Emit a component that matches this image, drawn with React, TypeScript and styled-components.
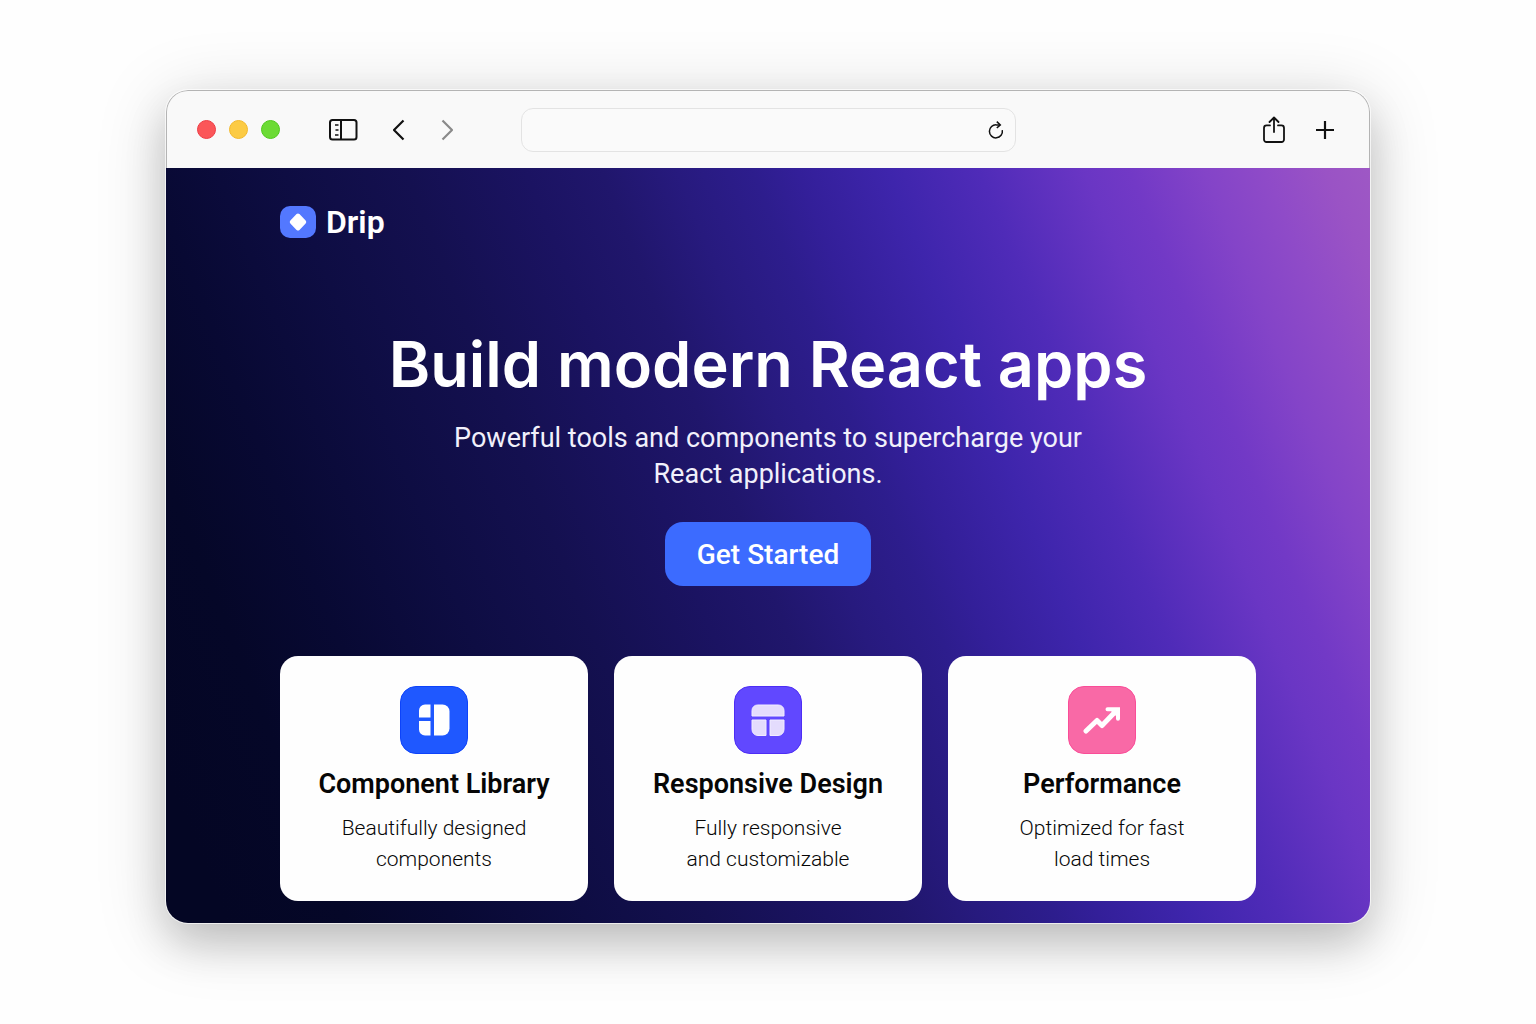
import React from "react";
import styled, { createGlobalStyle } from "styled-components";

const GlobalStyle = createGlobalStyle`
  *, *::before, *::after { box-sizing: border-box; }
  body {
    margin: 0;
    background: #fefefe;
    font-family: Roboto, Inter, "Liberation Sans", sans-serif;
  }
  button, input { font: inherit; }
  h1, h2, p { margin: 0; }
`;

const Stage = styled.div`
  padding: 90px 166px 100px;

  @media (max-width: 1100px) {
    padding: 32px 24px;
  }
`;

const Window = styled.div`
  border-radius: 22px;
  overflow: hidden;
  box-shadow:
    0 0 0 1px rgba(255, 255, 255, 0.7),
    0 22px 42px rgba(0, 0, 0, 0.16),
    0 10px 70px rgba(0, 0, 0, 0.17);
`;

const Toolbar = styled.header`
  display: grid;
  grid-template-columns: 1fr minmax(120px, 495px) 1fr;
  align-items: center;
  height: 78px;
  padding: 0 30px;
  border: 1px solid #b4b4b4;
  border-bottom: 0;
  border-radius: 22px 22px 0 0;
  background: #f9f9f9;
`;

const ToolGroup = styled.div<{ $end?: boolean; $gap: number }>`
  display: flex;
  align-items: center;
  justify-content: ${(p) => (p.$end ? "flex-end" : "flex-start")};
  gap: ${(p) => p.$gap}px;
`;

const WindowButtons = styled.div`
  display: flex;
  gap: 13px;
  margin-right: 14px;
`;

const WindowDot = styled.button<{ $fill: string; $ring: string }>`
  width: 19px;
  height: 19px;
  padding: 0;
  border: 1px solid ${(p) => p.$ring};
  border-radius: 50%;
  background: ${(p) => p.$fill};
`;

const IconButton = styled.button<{ $muted?: boolean }>`
  display: flex;
  padding: 0;
  border: 0;
  background: none;
  color: ${(p) => (p.$muted ? "#8a8a8a" : "#111")};
`;

const AddressBar = styled.div`
  display: flex;
  align-items: center;
  height: 44px;
  padding: 0 11px 0 16px;
  border: 1px solid #e3e3e3;
  border-radius: 12px;
  background: #fafafa;
`;

const AddressInput = styled.input`
  flex: 1;
  min-width: 0;
  border: 0;
  outline: 0;
  background: transparent;
  font-size: 16px;
`;

const Page = styled.main`
  padding: 38px 114px 22px;
  color: #fff;
  background: linear-gradient(
    68deg,
    #040624 4%,
    #050728 12%,
    #080933 19%,
    #0e0d43 28%,
    #141050 36%,
    #1b1362 44%,
    #20166c 49%,
    #271a7e 54%,
    #2d1d8d 59%,
    #331f99 62%,
    #3e25ac 68%,
    #4f2bb8 74%,
    #6a36c4 81%,
    #7239c6 84%,
    #8444c8 89%,
    #8f4bc8 93%,
    #9a53c5 97%,
    #9e58c5 100%
  );

  @media (max-width: 1100px) {
    padding: 32px 24px;
  }
`;

const Brand = styled.a`
  display: inline-flex;
  align-items: center;
  gap: 10px;
  height: 32px;
  color: inherit;
  font-size: 32px;
  font-weight: 600;
  line-height: 32px;
  text-decoration: none;
  vertical-align: top;
`;

const BrandMark = styled.span`
  display: grid;
  place-items: center;
  width: 36px;
  height: 32px;
  border-radius: 10px;
  background: #5378ff;
`;

const Hero = styled.section`
  display: flex;
  flex-direction: column;
  align-items: center;
  margin: 86px 0 70px;
  text-align: center;
`;

const Headline = styled.h1`
  font-family: Inter, Roboto, "Liberation Sans", sans-serif;
  font-size: 63px;
  font-weight: 600;
  line-height: 80px;
`;

const Lead = styled.p`
  max-width: 680px;
  margin-top: 16px;
  color: #f1f0fb;
  font-size: 27px;
  line-height: 36px;
`;

const PrimaryButton = styled.button`
  height: 64px;
  margin-top: 30px;
  padding: 0 32px;
  border: 0;
  border-radius: 18px;
  background: #3c6bff;
  color: #fff;
  font-size: 28px;
  font-weight: 500;
`;

const Features = styled.section`
  display: grid;
  grid-template-columns: repeat(auto-fit, minmax(280px, 1fr));
  gap: 26px;
`;

const Card = styled.article`
  display: flex;
  flex-direction: column;
  align-items: center;
  padding: 30px 24px 26px;
  border-radius: 18px;
  background: #fefefe;
  color: #060606;
  text-align: center;
`;

const CardIcon = styled.span<{ $fill: string; $ring: string }>`
  display: grid;
  place-items: center;
  width: 68px;
  height: 68px;
  border: 1px solid ${(p) => p.$ring};
  border-radius: 16px;
  background: ${(p) => p.$fill};
`;

const CardTitle = styled.h2`
  margin-top: 12px;
  font-size: 27px;
  font-weight: 600;
  line-height: 36px;
  white-space: nowrap;
`;

const CardText = styled.p`
  margin-top: 11px;
  font-size: 21px;
  font-weight: 300;
  line-height: 31px;
  white-space: pre-line;
`;

const SidebarIcon = () => (
  <svg width="30" height="28" viewBox="0 0 30 28" fill="none" stroke="currentColor" strokeWidth="2">
    <rect x="2" y="4" width="26.5" height="19.5" rx="2.5" />
    <path d="M13 4v19.5" />
    <path d="M7 9h3.5M7.5 14h3M7 19h3.5" strokeWidth="1.6" />
  </svg>
);

const BackIcon = () => (
  <svg width="14" height="28" viewBox="0 0 14 28" fill="none" stroke="currentColor" strokeWidth="2.2">
    <path d="M11.5 4.5 2 14l9.5 9.5" strokeLinejoin="round" />
  </svg>
);

const ForwardIcon = () => (
  <svg width="14" height="28" viewBox="0 0 14 28" fill="none" stroke="currentColor" strokeWidth="2.2">
    <path d="M2.5 4.5 12 14l-9.5 9.5" strokeLinejoin="round" />
  </svg>
);

const ReloadIcon = () => (
  <svg width="16" height="20" viewBox="0 0 16 20" fill="none" stroke="currentColor" strokeWidth="1.5">
    <path d="M14.3 10.2A6.5 6.5 0 1 1 8.5 4.9L12 4.9" />
    <path d="M8.8 1.6 12.3 4.9 8.8 8" />
  </svg>
);

const ShareIcon = () => (
  <svg width="24" height="28" viewBox="0 0 24 28" fill="none" stroke="currentColor" strokeWidth="1.8" strokeLinecap="round" strokeLinejoin="round">
    <path d="M8 9.4H4.5A2.5 2.5 0 0 0 2 11.9v11.6A2.5 2.5 0 0 0 4.5 26h15a2.5 2.5 0 0 0 2.5-2.5V11.9a2.5 2.5 0 0 0-2.5-2.5H16" />
    <path d="M12 16V1.5M7.5 6 12 1.5 16.5 6" />
  </svg>
);

const PlusIcon = () => (
  <svg width="28" height="28" viewBox="0 0 28 28" fill="none" stroke="currentColor" strokeWidth="2.2">
    <path d="M14 5v18M5 14h18" />
  </svg>
);

const DiamondIcon = () => (
  <svg width="20" height="20" viewBox="0 0 20 20" fill="#fff" stroke="#fff" strokeWidth="4" strokeLinejoin="round">
    <path d="M10 3.5 16.2 10 10 16.5 3.8 10Z" />
  </svg>
);

const LibraryIcon = () => (
  <svg width="32" height="32" viewBox="0 0 32 32" fill="#fff">
    <path d="M12.5 .5V13.5H1V6.5a6 6 0 0 1 6-6Z" />
    <path d="M12.5 17V31.5H7a6 6 0 0 1-6-6V17Z" />
    <path d="M16 .5h8.5a7 7 0 0 1 7 7v17a7 7 0 0 1-7 7H16Z" />
  </svg>
);

const LayoutIcon = () => (
  <svg width="34" height="32" viewBox="0 0 34 32" fill="#e4dcfd" stroke="#f2edff" strokeWidth="1">
    <path d="M6.5 1h21a5.5 5.5 0 0 1 5.5 5.5V12H1V6.5A5.5 5.5 0 0 1 6.5 1Z" />
    <path d="M1 16h14v15.5H7a6 6 0 0 1-6-6Z" />
    <path d="M19 16h14v9.5a6 6 0 0 1-6 6h-8Z" />
  </svg>
);

const TrendIcon = () => (
  <svg width="38" height="30" viewBox="0 0 38 30" fill="none" stroke="#fff" strokeWidth="5" strokeLinecap="round" strokeLinejoin="round">
    <path d="M3 26 14 15.5 19 20.5 33 6" />
    <path d="M24.5 4.2H35V13.8" strokeWidth="4" strokeLinejoin="miter" />
    <path d="M26 4h9v9Z" fill="#fff" stroke="none" />
  </svg>
);

const features = [
  {
    title: "Component Library",
    text: "Beautifully designed\ncomponents",
    fill: "#1f58ff",
    ring: "#0d43fa",
    icon: <LibraryIcon />,
  },
  {
    title: "Responsive Design",
    text: "Fully responsive\nand customizable",
    fill: "#6148ff",
    ring: "#4d2df5",
    icon: <LayoutIcon />,
  },
  {
    title: "Performance",
    text: "Optimized for fast\nload times",
    fill: "#f969a6",
    ring: "#fa4d98",
    icon: <TrendIcon />,
  },
];

export default function App() {
  return (
    <>
      <GlobalStyle />
      <Stage>
        <Window>
          <Toolbar>
            <ToolGroup $gap={34}>
              <WindowButtons>
                <WindowDot type="button" aria-label="Close" $fill="#fb5659" $ring="#ee3c45" />
                <WindowDot type="button" aria-label="Minimize" $fill="#fccb44" $ring="#f3b92c" />
                <WindowDot type="button" aria-label="Zoom" $fill="#6cdb35" $ring="#4fc91d" />
              </WindowButtons>
              <IconButton type="button" aria-label="Show sidebar">
                <SidebarIcon />
              </IconButton>
              <IconButton type="button" aria-label="Back">
                <BackIcon />
              </IconButton>
              <IconButton type="button" aria-label="Forward" $muted>
                <ForwardIcon />
              </IconButton>
            </ToolGroup>
            <AddressBar>
              <AddressInput type="text" aria-label="Address" />
              <IconButton type="button" aria-label="Reload">
                <ReloadIcon />
              </IconButton>
            </AddressBar>
            <ToolGroup $end $gap={25}>
              <IconButton type="button" aria-label="Share">
                <ShareIcon />
              </IconButton>
              <IconButton type="button" aria-label="New tab">
                <PlusIcon />
              </IconButton>
            </ToolGroup>
          </Toolbar>
          <Page>
            <Brand href="#">
              <BrandMark>
                <DiamondIcon />
              </BrandMark>
              Drip
            </Brand>
            <Hero>
              <Headline>Build modern React apps</Headline>
              <Lead>Powerful tools and components to supercharge your React applications.</Lead>
              <PrimaryButton type="button">Get Started</PrimaryButton>
            </Hero>
            <Features>
              {features.map((f) => (
                <Card key={f.title}>
                  <CardIcon $fill={f.fill} $ring={f.ring}>
                    {f.icon}
                  </CardIcon>
                  <CardTitle>{f.title}</CardTitle>
                  <CardText>{f.text}</CardText>
                </Card>
              ))}
            </Features>
          </Page>
        </Window>
      </Stage>
    </>
  );
}
